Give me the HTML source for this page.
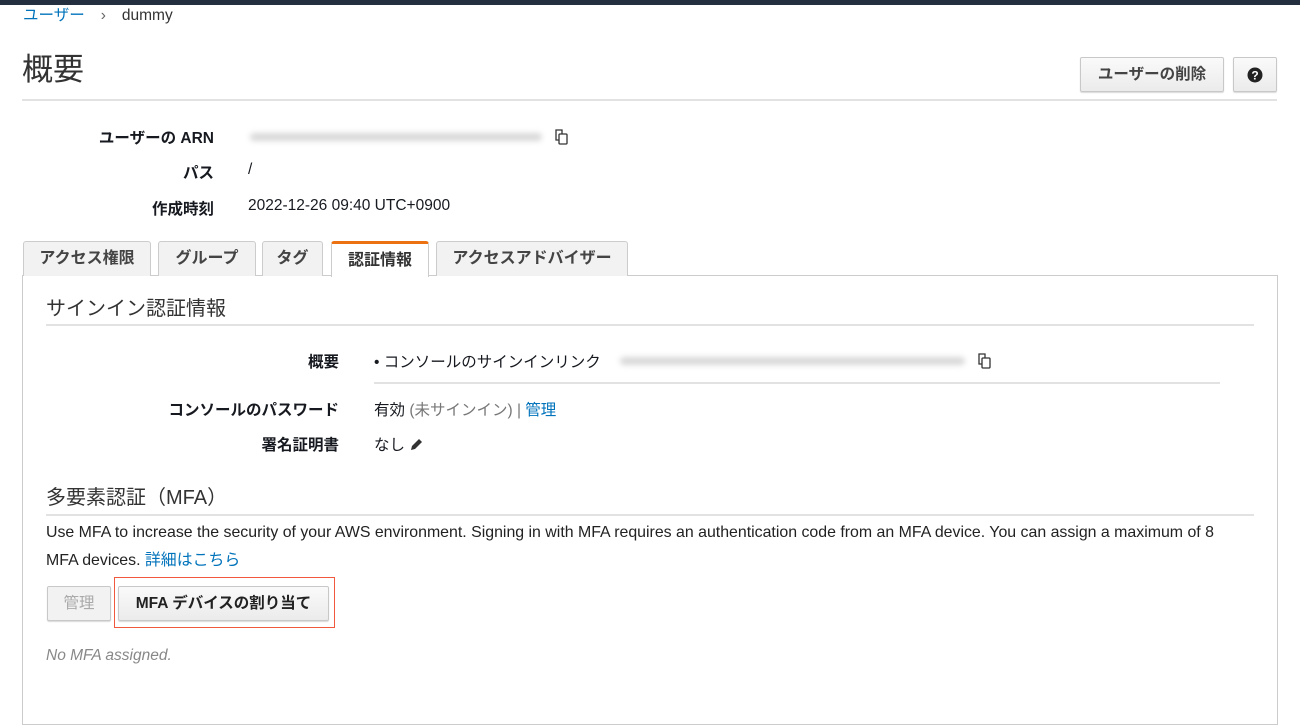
<!DOCTYPE html>
<html><head><meta charset="utf-8"><style>
*{margin:0;padding:0;box-sizing:border-box}
body{width:1300px;height:709px;overflow:hidden;background:#fff;font-family:"Liberation Sans","Noto Sans CJK JP",sans-serif;color:#16191f;position:relative;font-size:15.5px}
.a{position:absolute;white-space:nowrap}
.lbl{position:absolute;font-weight:bold;text-align:right;white-space:nowrap;font-size:15.5px}
.btn{position:absolute;border:1px solid #c8c8c8;border-radius:2px;background:linear-gradient(#fafafa,#ebebeb);font-weight:bold;color:#444;text-align:center;box-shadow:0 1px 1px rgba(0,0,0,.15)}
.tab{position:absolute;top:241px;height:35px;border:1px solid #ccc;border-bottom:none;background:#f2f2f2;border-radius:3px 3px 0 0;font-weight:bold;color:#444;text-align:center;line-height:33px;font-size:16px}
.blur{position:absolute;height:8px;background:#d8d8d8;filter:blur(3px);border-radius:4px}
.line{position:absolute;height:2px;background:#e2e2e2}
</style></head><body>
<div class="a" style="left:0;top:0;width:1300px;height:5px;background:#232f3e"></div>
<div class="a" style="left:23px;top:3px;font-size:15.5px"><span style="color:#0073bb">ユーザー</span><span style="color:#666;margin:0 16px 0 16px">›</span><span style="color:#333">dummy</span></div>
<div class="a" style="left:22px;top:44px;font-size:31px;color:#333">概要</div>
<div class="btn" style="left:1080px;top:57px;width:144px;height:35px;line-height:33px;font-size:15.5px">ユーザーの削除</div>
<div class="btn" style="left:1233px;top:57px;width:44px;height:35px;padding-top:9px"><svg width="16" height="16" viewBox="0 0 16 16"><circle cx="8" cy="8" r="7.5" fill="#222"/><text x="8" y="12.5" text-anchor="middle" font-size="12" font-weight="bold" fill="#fff" font-family="Liberation Sans">?</text></svg></div>
<div class="line" style="left:22px;top:99px;width:1255px"></div>

<div class="lbl" style="right:1086px;top:126px">ユーザーの ARN</div>
<div class="blur" style="left:250px;top:133px;width:292px"></div>
<svg class="a" style="left:553px;top:128px" width="17" height="18" viewBox="0 0 17 18" fill="none" stroke="#333" stroke-width="1.3"><rect x="6" y="6" width="8" height="10" rx="1"/><path d="M9 6V2H3v10h3"/></svg>
<div class="lbl" style="right:1086px;top:161px">パス</div>
<div class="a" style="left:248px;top:161px">/</div>
<div class="lbl" style="right:1086px;top:197px">作成時刻</div>
<div class="a" style="left:248px;top:197px">2022-12-26 09:40 UTC+0900</div>

<div class="a" style="left:22px;top:275px;width:1256px;height:450px;border:1px solid #ccc"></div>
<div class="tab" style="left:23px;width:128px">アクセス権限</div>
<div class="tab" style="left:158px;width:98px">グループ</div>
<div class="tab" style="left:262px;width:61px">タグ</div>
<div class="tab" style="left:331px;width:98px;background:#fff;height:36px;border-top:3px solid #ec7211;color:#333">認証情報</div>
<div class="tab" style="left:436px;width:192px">アクセスアドバイザー</div>

<div class="a" style="left:46px;top:292px;font-size:20px;color:#333">サインイン認証情報</div>
<div class="line" style="left:46px;top:324px;width:1208px"></div>
<div class="lbl" style="right:961px;top:350px">概要</div>
<div class="a" style="left:374px;top:350px">• コンソールのサインインリンク</div>
<div class="blur" style="left:620px;top:357px;width:345px"></div>
<svg class="a" style="left:976px;top:352px" width="17" height="18" viewBox="0 0 17 18" fill="none" stroke="#333" stroke-width="1.3"><rect x="6" y="6" width="8" height="10" rx="1"/><path d="M9 6V2H3v10h3"/></svg>
<div class="line" style="left:374px;top:382px;width:846px"></div>
<div class="lbl" style="right:961px;top:398px">コンソールのパスワード</div>
<div class="a" style="left:374px;top:398px">有効 <span style="color:#777">(未サインイン) | </span><span style="color:#0073bb">管理</span></div>
<div class="lbl" style="right:961px;top:433px">署名証明書</div>
<div class="a" style="left:374px;top:433px">なし <svg width="14" height="14" viewBox="0 0 14 14" style="vertical-align:-2px"><path d="M2 12l1-4 7-7 3 3-7 7z" fill="#333"/></svg></div>

<div class="a" style="left:46px;top:481px;font-size:20px;color:#333">多要素認証（MFA）</div>
<div class="line" style="left:46px;top:514px;width:1208px"></div>
<div class="a" style="left:46px;top:524px;font-size:15.9px;color:#222">Use MFA to increase the security of your AWS environment. Signing in with MFA requires an authentication code from an MFA device. You can assign a maximum of 8</div>
<div class="a" style="left:46px;top:547px;font-size:15.9px;color:#222">MFA devices. <span style="color:#0073bb">詳細はこちら</span></div>
<div class="btn" style="left:47px;top:586px;width:64px;height:35px;line-height:33px;color:#aaa;font-weight:normal;background:#f2f2f2;font-size:15.5px">管理</div>
<div class="a" style="left:114px;top:577px;width:221px;height:51px;border:1.5px solid #f0593e"></div>
<div class="btn" style="left:118px;top:586px;width:211px;height:35px;line-height:33px;font-size:15.5px;color:#222">MFA デバイスの割り当て</div>
<div class="a" style="left:46px;top:647px;font-style:italic;color:#888">No MFA assigned.</div>
</body></html>
